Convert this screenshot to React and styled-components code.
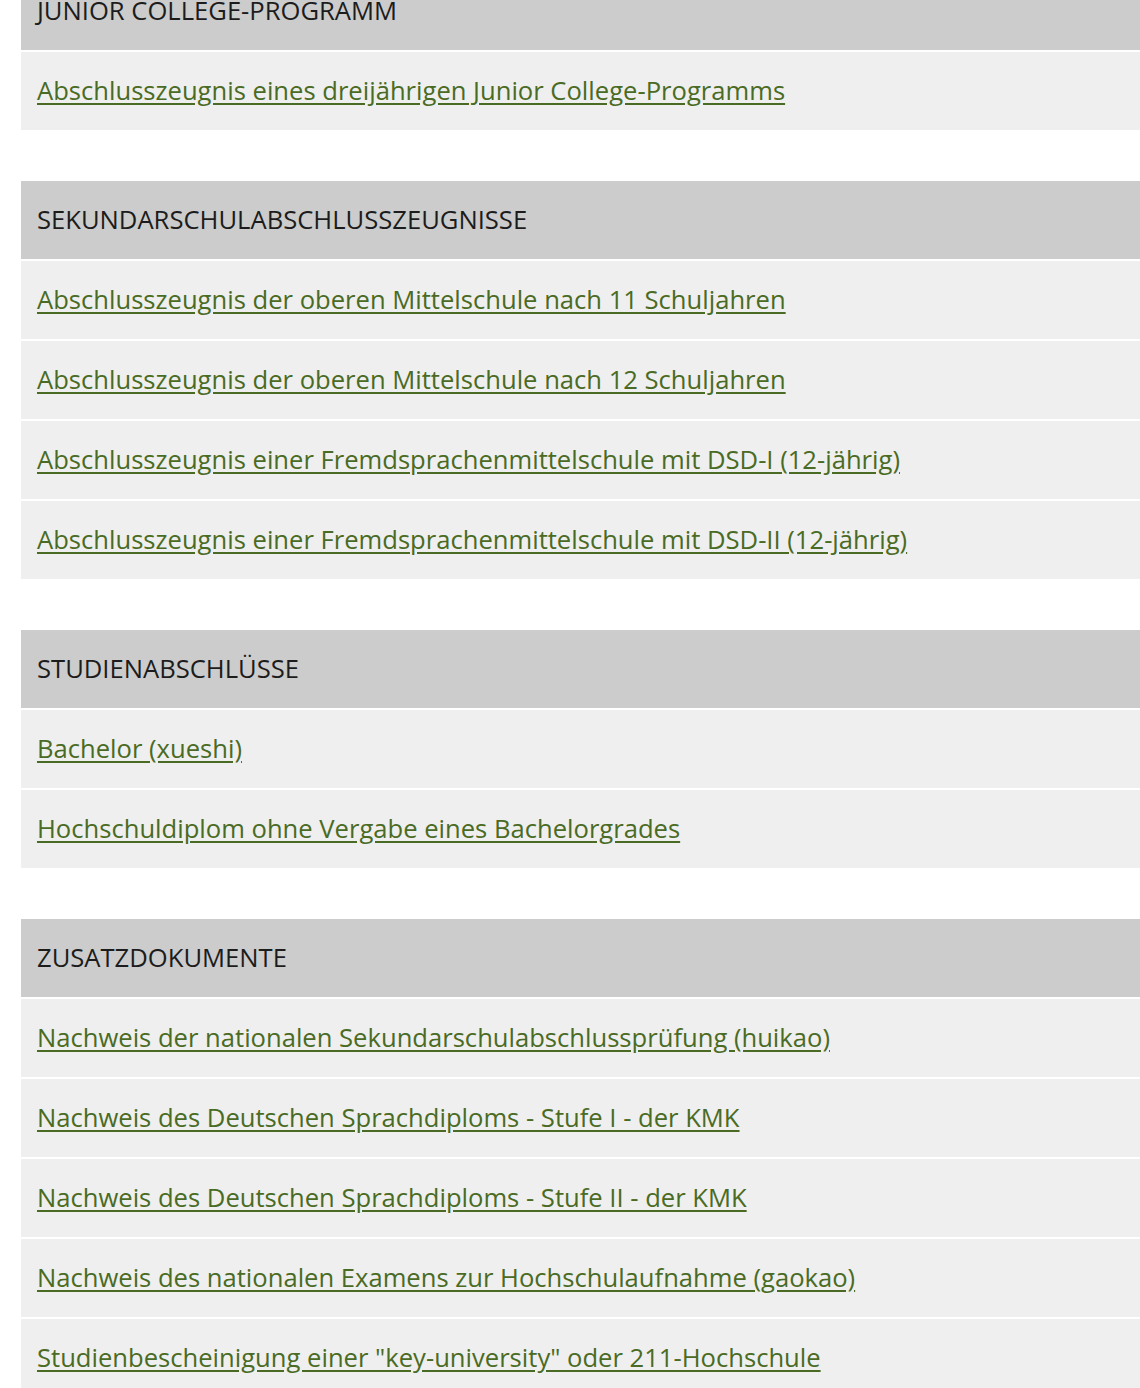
import React from 'react';
import styled, {createGlobalStyle} from 'styled-components';

const GlobalStyle = createGlobalStyle`
    html, body{
        margin: 0;
        padding: 0;
        background: #ffffff;
        overflow: hidden;
    }
    body{
        font-family: "Open Sans", "Liberation Sans", sans-serif;
    }
`

const Page = styled.div`
    margin: -28px 0 0 21px;
    display: flex;
    flex-direction: column;
    gap: 51px;
`

const Section = styled.section`
    display: flex;
    flex-direction: column;
    gap: 2px;
`

const Header = styled.h3`
    margin: 0;
    height: 78px;
    box-sizing: border-box;
    display: flex;
    align-items: center;
    padding: 0 16px 2px;
    background: #cccccc;
    color: #1c1c1c;
    font-size: 25.6px;
    font-weight: 400;
    text-transform: uppercase;
`

const Row = styled.div`
    height: 78px;
    box-sizing: border-box;
    display: flex;
    align-items: center;
    padding: 0 16px 2px;
    background: #efefef;
`

const DocLink = styled.a`
    color: #4a6b24;
    font-size: 25.6px;
    text-decoration: underline;
    text-underline-offset: 3px;
`

const sections = [
    {
        title: 'Junior College-Programm',
        items: ['Abschlusszeugnis eines dreijährigen Junior College-Programms']
    },
    {
        title: 'Sekundarschulabschlusszeugnisse',
        items: [
            'Abschlusszeugnis der oberen Mittelschule nach 11 Schuljahren',
            'Abschlusszeugnis der oberen Mittelschule nach 12 Schuljahren',
            'Abschlusszeugnis einer Fremdsprachenmittelschule mit DSD-I (12-jährig)',
            'Abschlusszeugnis einer Fremdsprachenmittelschule mit DSD-II (12-jährig)'
        ]
    },
    {
        title: 'Studienabschlüsse',
        items: ['Bachelor (xueshi)', 'Hochschuldiplom ohne Vergabe eines Bachelorgrades']
    },
    {
        title: 'Zusatzdokumente',
        items: [
            'Nachweis der nationalen Sekundarschulabschlussprüfung (huikao)',
            'Nachweis des Deutschen Sprachdiploms - Stufe I - der KMK',
            'Nachweis des Deutschen Sprachdiploms - Stufe II - der KMK',
            'Nachweis des nationalen Examens zur Hochschulaufnahme (gaokao)',
            'Studienbescheinigung einer "key-university" oder 211-Hochschule'
        ]
    }
]

const App = () => {
    return(
        <>
            <GlobalStyle/>
            <Page>
                {sections.map(section => (
                    <Section key={section.title}>
                        <Header>{section.title}</Header>
                        {section.items.map(item => (
                            <Row key={item}>
                                <DocLink href='#'>{item}</DocLink>
                            </Row>
                        ))}
                    </Section>
                ))}
            </Page>
        </>
    )
}

export default App;
